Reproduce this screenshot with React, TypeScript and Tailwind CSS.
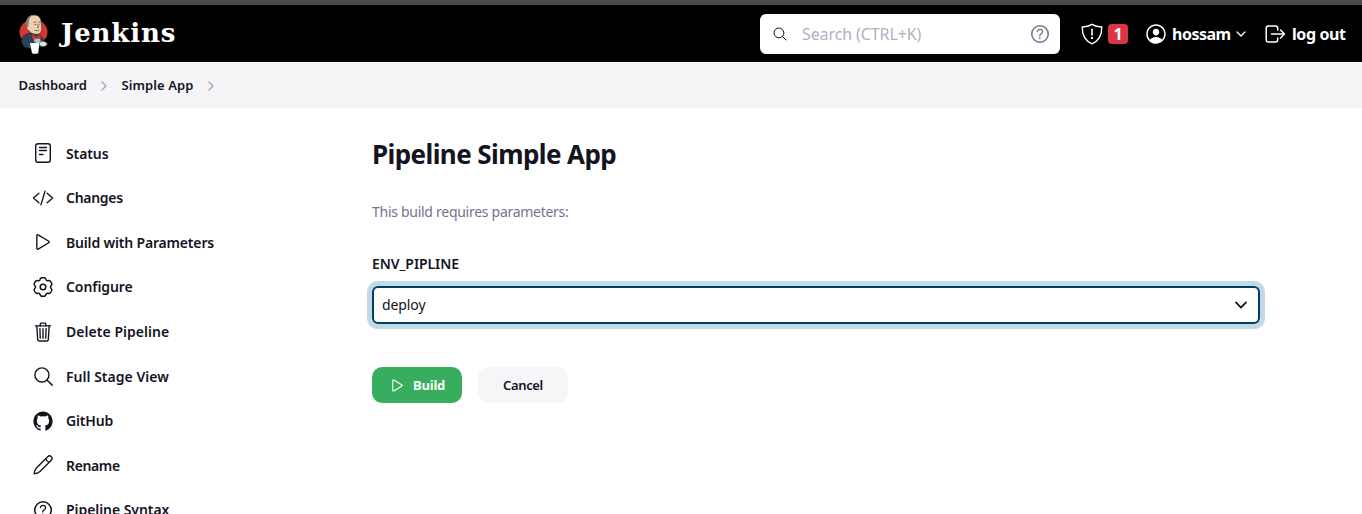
import type { ReactNode } from "react";
import {
  IoCodeSlashOutline,
  IoHelpCircleOutline,
  IoLogoGithub,
  IoPersonCircleOutline,
  IoPlayOutline,
  IoSearchOutline,
  IoTrashOutline,
} from "react-icons/io5";

function Chevron({ className, d = "M184 112l144 144-144 144", w = 48 }: { className: string; d?: string; w?: number }) {
  return (
    <svg viewBox="0 0 512 512" className={className} fill="none" stroke="currentColor" strokeWidth={w} strokeLinecap="round" strokeLinejoin="round">
      <path d={d} />
    </svg>
  );
}

const DOWN = "M112 184l144 144 144-144";

function Butler() {
  return (
    <svg viewBox="0 0 30 40" className="h-10 w-[30px] shrink-0">
      <ellipse cx="14.500" cy="18" rx="14" ry="12.500" fill="#d33833" />
      <path d="M8.500 19.500 4 22.500l-1.500 5 2.500 5.500 6 1.500 9-1 5-3-.5-5-3-4-5-2z" fill="#2b4455" stroke="#15232c" strokeWidth=".6" />
      <path d="M8 11.500C7 5.500 10 1 15 1c4.800 0 7 3 7.200 7.500l.5 5.500c.2 4-1.900 6.300-5 6.300-3.700 0-7-1.600-8.300-4.300-1.700 0-2.400-2.800-1.400-4.500z" fill="#ecd0b0" stroke="#3b2b25" strokeWidth=".6" />
      <path d="M7.300 12C6 6 9 1.300 14 1.100 11 3 9.600 5.500 9.800 9.500l-.7 4.300z" fill="#8a8078" />
      <path d="M14.300 8.600l3-.7M19.300 8h2M15.300 10.500h1.700M19.900 10.300h1M18.500 9.800l1 3.500h-1.700M15.500 16.200c1.600.7 3.200.6 4.700-.3" fill="none" stroke="#55382c" strokeWidth=".7" />
      <path d="M14.500 23l3 1 3-1 1.300 4.500-2.300 3-4.300-3z" fill="#a9c4d6" />
      <path d="M12.800 20l4.500 2.200v2L13.500 26zM17.700 22.200l4-2.200.6 4.800-4.600-.6z" fill="#d33833" stroke="#681d1b" strokeWidth=".4" />
      <path d="M11 29h9.200l-.9 10.300c-2 .7-4.500.7-6.300 0z" fill="#fff" />
      <path d="M20.500 28.800c2.500-2.300 6.500-1.500 7.700 1-.4 1.800-2 2.700-4 2.700-1.500 0-3-.7-3.700-1.500z" fill="#dfe4e8" stroke="#59666e" strokeWidth=".6" />
    </svg>
  );
}

function DocIcon() {
  return (
    <svg viewBox="0 0 22 22" className="size-[22px]" fill="none" stroke="currentColor" strokeLinecap="round">
      <rect x="3.700" y="1.700" width="14.600" height="18.600" rx="2.300" strokeWidth="1.400" />
      <path d="M7.500 5.500h7M7.500 8.500h7M7.500 12.500h3.500" strokeWidth="1.300" />
    </svg>
  );
}

const gearPoints = Array.from({ length: 120 }, (_, i) => {
  const t = (i / 120) * Math.PI * 2;
  const r = 8.7 + 0.95 * Math.cos(6 * t) - 0.3 * Math.cos(12 * t);
  return `${(11 + r * Math.sin(t)).toFixed(2)},${(11 - r * Math.cos(t)).toFixed(2)}`;
}).join(" ");

function GearIcon() {
  return (
    <svg viewBox="0 0 22 22" className="size-[22px]" fill="none" stroke="currentColor" strokeWidth="1.500" strokeLinejoin="round">
      <polygon points={gearPoints} />
      <circle cx="11" cy="11" r="2.800" />
    </svg>
  );
}

function PencilIcon() {
  return (
    <svg viewBox="0 0 22 22" className="size-[22px]" fill="none" stroke="currentColor" strokeWidth="1.400" strokeLinecap="round" strokeLinejoin="round">
      <path d="M2.200 19.800c.1-2.500.8-4.300 2.200-5.800L15.700 2.700c1-1 2.500-1 3.600 0s1 2.600 0 3.600L8 17.600c-1.500 1.400-3.300 2.100-5.800 2.200zM13.900 4.500c.3 2 1.600 3.300 3.600 3.600" />
    </svg>
  );
}

function ShieldIcon() {
  return (
    <svg viewBox="0 0 22 22" className="size-[22px]" fill="none" stroke="currentColor" strokeWidth="1.400" strokeLinecap="round" strokeLinejoin="round">
      <path d="M11 1.300C8.500 3 4.700 3.900 1.200 4c-.1 7.500 2.200 13.500 9.800 16.800C18.600 17.500 20.900 11.500 20.800 4 17.300 3.900 13.500 3 11 1.300z" />
      <path d="M11 6.300v5.700" strokeWidth="1.600" />
      <circle cx="11" cy="14.900" r=".5" />
    </svg>
  );
}

function LogoutIcon() {
  return (
    <svg viewBox="0 0 22 20" className="h-5 w-[22px]" fill="none" stroke="currentColor" strokeWidth="1.500" strokeLinecap="round" strokeLinejoin="round">
      <path d="M12.700 6V4.200c0-1.300-1-2.300-2.300-2.300H3.500c-1.300 0-2.300 1-2.300 2.300v11.600c0 1.300 1 2.300 2.300 2.300h6.900c1.300 0 2.300-1 2.300-2.300V14" />
      <path d="M6.500 10h12.900M15.500 6l4 4-4 4" />
    </svg>
  );
}

const items: { label: string; icon: ReactNode; text: string }[] = [
  { label: "Status", icon: <DocIcon />, text: "tracking-[-0.100px]" },
  { label: "Changes", icon: <IoCodeSlashOutline className="size-[22px]" />, text: "tracking-[-0.280px]" },
  { label: "Build with Parameters", icon: <IoPlayOutline className="size-[22px]" />, text: "tracking-[-0.170px]" },
  { label: "Configure", icon: <GearIcon />, text: "tracking-[-0.080px]" },
  { label: "Delete Pipeline", icon: <IoTrashOutline className="size-[22px]" />, text: "tracking-[0.040px]" },
  { label: "Full Stage View", icon: <IoSearchOutline className="size-[23px]" />, text: "tracking-[0.020px]" },
  { label: "GitHub", icon: <IoLogoGithub className="size-[22px]" />, text: "tracking-[-0.180px]" },
  { label: "Rename", icon: <PencilIcon />, text: "tracking-[-0.360px]" },
  { label: "Pipeline Syntax", icon: <IoHelpCircleOutline className="size-6" />, text: "tracking-[-0.060px]" },
];

export default function App() {
  return (
    <div className="flex h-[514px] w-[1362px] flex-col overflow-hidden bg-white font-['Noto_Sans',sans-serif] text-[#14141f]">
      <div className="h-[5px] shrink-0 bg-[#4a4a4a]" />
      <header className="flex h-[57px] shrink-0 items-center bg-black pr-4 pl-[19px] text-white">
        <Butler />
        <span className="ml-[12px] w-[699px] pb-0.5 font-['DejaVu_Serif',serif] text-[26px] leading-none font-bold tracking-[0.850px]">Jenkins</span>
        <div className="flex h-10 w-[300px] shrink-0 items-center rounded-[6px] bg-white pr-2 pl-3 text-[#14141f]">
          <IoSearchOutline className="size-4" />
          <span className="ml-3.5 grow text-base tracking-[-0.100px] text-[#b0b0c2]">Search (CTRL+K)</span>
          <IoHelpCircleOutline className="size-6 text-[#73738c]" />
        </div>
        <div className="ml-[21px] flex shrink-0 items-center">
          <ShieldIcon />
          <span className="ml-[5px] flex h-5 w-5 items-center justify-center rounded-[4px] bg-[#dc3545] text-base font-bold">1</span>
        </div>
        <div className="ml-4 flex shrink-0 items-center">
          <IoPersonCircleOutline className="size-6" />
          <span className="ml-1 w-[59px] text-base font-bold tracking-[-0.500px] whitespace-nowrap">hossam</span>
          <Chevron className="ml-[3px] size-3.5" d={DOWN} w={48} />
        </div>
        <div className="ml-[17px] flex shrink-0 items-center">
          <LogoutIcon />
          <span className="ml-[5px] text-base font-bold tracking-[-0.400px] whitespace-nowrap">log out</span>
        </div>
      </header>
      <nav className="flex h-[46px] shrink-0 items-center bg-[#f5f5f8] pt-px pl-[18.500px] text-[13px] font-semibold">
        <span className="w-[68.500px] tracking-[-0.080px]">Dashboard</span>
        <Chevron className="ml-2.5 size-3.5 text-[#a3a3b5]" />
        <span className="ml-[10.500px] w-[72.500px] tracking-[0.080px] whitespace-nowrap">Simple App</span>
        <Chevron className="ml-2.5 size-3.5 text-[#a3a3b5]" />
      </nav>
      <div className="flex grow">
        <aside className="w-[372px] shrink-0 pt-[22.900px] pl-[31px]">
          {items.map((item) => (
            <a key={item.label} className="flex h-[44.600px] items-center text-[14px] font-semibold">
              <span className="flex w-6 items-center justify-center">{item.icon}</span>
              <span className={`ml-[11px] whitespace-nowrap ${item.text}`}>{item.label}</span>
            </a>
          ))}
        </aside>
        <main className="w-[888px] pt-[28px]">
          <h1 className="text-[26px] leading-9 font-bold tracking-[-0.590px]">Pipeline Simple App</h1>
          <p className="mt-[29px] text-[14px] leading-[22px] tracking-[-0.280px] text-[#73738c]">This build requires parameters:</p>
          <div className="mt-[30px] text-[14px] leading-[22px] font-semibold tracking-[-0.080px]">ENV_PIPLINE</div>
          <div className="mt-[11px] flex h-[38px] items-center justify-between rounded-[6px] border-2 border-[#003d61] pr-2 pl-2 text-[14px] shadow-[0_0_0_5px_#c2d9e7]">
            <span className="pb-0.5 tracking-[-0.100px]">deploy</span>
            <Chevron className="size-[18px]" d={DOWN} w={52} />
          </div>
          <div className="mt-[43px] flex gap-4 text-[13px] font-semibold">
            <button className="flex h-9 w-[90px] items-center rounded-[10px] bg-[#36ae5d] pt-px pl-[17px] text-white">
              <IoPlayOutline className="size-[17px]" />
              <span className="ml-[7px] font-bold tracking-[-0.200px]">Build</span>
            </button>
            <button className="h-9 w-[90px] rounded-[10px] bg-[#f6f6f9] pt-0.5 tracking-[-0.350px]">Cancel</button>
          </div>
        </main>
      </div>
    </div>
  );
}
